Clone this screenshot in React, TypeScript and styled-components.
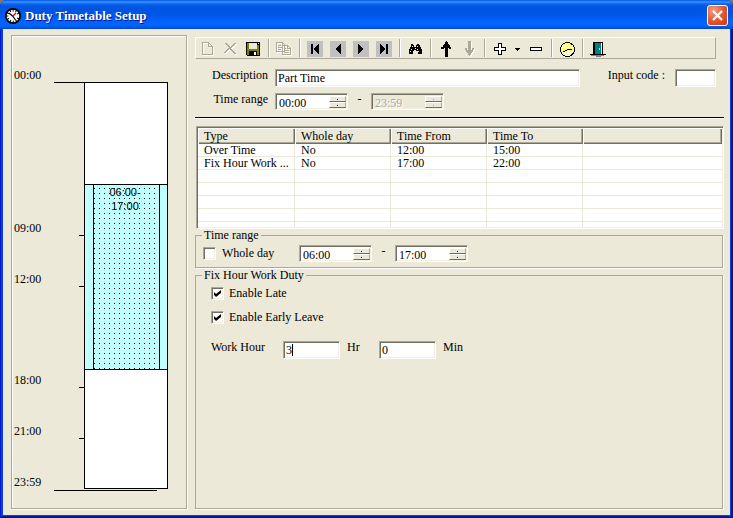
import React from 'react';
import styled, { createGlobalStyle, css } from 'styled-components';

const face = '#ece9d8';
const shade = '#aca899';
const dark = '#716f64';

const GlobalStyle = createGlobalStyle`
  * { box-sizing: border-box; }
  body {
    margin: 0;
    background: #7a7a7a;
    color: #000;
    font: 12px/14px "Liberation Serif", "Noto Sans CJK TC", serif;
  }
  button, input { font: inherit; color: inherit; border-radius: 0; margin: 0; }
`;

const Window = styled.main`
  display: flex;
  flex-direction: column;
  min-height: 100vh;
  overflow: hidden;
  border-radius: 7px 7px 0 0;
  background: #0a3fd8;
  box-shadow: inset 1px 0 #0019cf, inset -1px -1px #00138c, inset -2px -2px #001ea0;
`;

const TitleBar = styled.header`
  display: flex;
  align-items: center;
  gap: 4px;
  height: 29px;
  padding: 2px 5px 0 5px;
  background: linear-gradient(#0058e6 0, #3a93ff 2px, #0a63ee 4px, #0054e0 7px, #0055e5 14px, #0062fb 21px, #0066ff 25px, #0059ee 27px, #0046c8 29px);
`;

const Title = styled.h1`
  flex: 1;
  margin: 0;
  color: #fff;
  font-size: 13px;
  line-height: 16px;
  font-weight: bold;
  text-shadow: 1px 1px #0f1089;
`;

const CloseButton = styled.button`
  display: grid;
  place-items: center;
  width: 21px;
  height: 21px;
  padding: 0;
  border: 1px solid #fff;
  border-radius: 3px;
  background: radial-gradient(circle at 30% 25%, #f0a088, #e25a35 50%, #c8370e);
`;

const Client = styled.div`
  flex: 1;
  display: flex;
  gap: 7px;
  margin: 0 3px 3px;
  padding: 6px 6px 5px 8px;
  background: ${face};
`;

const etched = css`
  border: 1px solid ${shade};
  box-shadow: 1px 1px #fff, inset 1px 1px #fff;
`;

const sunken = css`
  border: 1px solid;
  border-color: ${shade} #fff #fff ${shade};
  box-shadow: inset 1px 1px ${dark}, inset -1px -1px #f1efe2;
`;

const DayPanel = styled.section`
  ${etched}
  display: flex;
  flex: 0 0 176px;
  margin-right: 1px;
  margin-bottom: 1px;
  padding: 46px 18px 19px 2px;
`;

const Axis = styled.ol`
  flex: 1;
  display: grid;
  grid-template-rows: 9fr 3fr 6fr 3fr 3fr 0;
  margin: 0;
  padding: 0;
  list-style: none;
`;

const AxisMark = styled.li<{ $edge?: boolean }>`
  display: flex;
  justify-content: space-between;
  align-items: flex-start;
  min-height: 0;
  &::after {
    content: '';
    width: ${p => (p.$edge ? 30 : 5)}px;
    height: 1px;
    background: #000;
  }
  &:last-child::after { width: 103px; margin: 1px -73px 0 0; }
`;

const AxisTime = styled.time`
  margin-top: -14px;
`;

const DayColumn = styled.div`
  flex: 0 0 84px;
  display: grid;
  grid-template-rows: 6fr 11fr 7fr;
  border: 1px solid #000;
  background: #fff;
`;

const DutyBlock = styled.div`
  grid-row: 2;
  display: flex;
  padding: 0 7px 0 8px;
  border: solid #000;
  border-width: 1px 0;
  background: #c0ffff;
`;

const DutyTime = styled.div`
  flex: 1;
  padding-right: 3px;
  border: solid #000;
  border-width: 0 1px;
  text-align: center;
  font-family: "Liberation Sans", sans-serif;
  font-size: 11px;
  background:
    linear-gradient(#c0ffff 4px, transparent 4px) 0 -1px / 5px 5px,
    linear-gradient(90deg, #000 1px, #c0ffff 1px) 0 -1px / 5px 5px;
`;

const Editor = styled.form`
  flex: 1;
  min-width: 0;
  display: flex;
  flex-direction: column;
`;

const Toolbar = styled.div`
  display: flex;
  height: 22px;
  margin: 2px 8px 0 0;
  border: 1px solid;
  border-color: #fff ${shade} ${shade} #fff;
`;

const ToolButton = styled.button<{ $narrow?: boolean }>`
  display: flex;
  width: ${p => (p.$narrow ? 13 : 23)}px;
  padding: 3px 0 0 3px;
  border: 0;
  background: none;
  svg { flex: none; }
`;

const Separator = styled.span`
  width: 2px;
  margin: 1px 3px;
  border-left: 1px solid ${shade};
  border-right: 1px solid #fff;
`;

const HeaderFields = styled.div`
  display: grid;
  grid-template-columns: 73px 305px 1fr 41px;
  column-gap: 7px;
  row-gap: 6px;
  margin: 10px 8px 0 0;
`;

const FieldLabel = styled.label`
  text-align: right;
  line-height: 13px;
`;

const CodeLabel = styled(FieldLabel)`
  white-space: pre;
`;

const Row = styled.div<{ $span?: boolean }>`
  display: flex;
  align-items: flex-start;
  ${p => p.$span && 'grid-column: span 3;'}
`;

const Dash = styled.span`
  width: 23px;
  line-height: 12px;
  text-align: center;
`;

const TextInput = styled.input<{ $width?: number }>`
  ${sunken}
  width: ${p => (p.$width ? `${p.$width}px` : '100%')};
  height: 18px;
  padding: 1px 3px 0 2px;
  background: #fff;
  outline: none;
`;

const SpinFrame = styled.div<{ $off?: boolean }>`
  ${sunken}
  display: flex;
  width: 73px;
  height: 17px;
  padding: 2px 1px 1px 3px;
  background: ${p => (p.$off ? face : '#fff')};
`;

const SpinText = styled.input`
  flex: 1;
  min-width: 0;
  padding: 1px 0 0;
  border: 0;
  background: none;
  outline: none;
  &:disabled { color: ${shade}; text-shadow: 1px 1px #fff; }
`;

const SpinButtons = styled.div`
  display: grid;
  grid-template-rows: 1fr 1fr;
  width: 17px;
`;

const SpinButton = styled.button`
  display: grid;
  place-items: center;
  min-height: 0;
  padding: 0;
  border: 1px solid;
  border-color: #fff ${shade} ${dark} #fff;
  background: ${face};
  &::after { content: ''; width: 1px; height: 1px; background: #000; }
  &:disabled::after { background: ${shade}; }
`;

const Rule = styled.hr`
  width: 100%;
  height: 2px;
  margin: 7px 0;
  border: 0;
  border-top: 1px solid #000;
  border-bottom: 1px solid #fff;
`;

const TableFrame = styled.div`
  ${sunken}
  height: 103px;
  margin-left: 1px;
  padding: 1px;
  overflow: hidden;
  background: #fff;
`;

const Table = styled.table`
  width: 100%;
  table-layout: fixed;
  border-collapse: separate;
  border-spacing: 0;
  line-height: 12px;
`;

const Column = styled.col<{ $width?: number }>`
  ${p => p.$width && `width: ${p.$width}px;`}
`;

const HeadCell = styled.th`
  height: 16px;
  padding: 0 6px 1px;
  background: ${face};
  box-shadow: inset 1px 1px #fff, inset -1px -1px ${dark}, inset -2px -2px ${shade};
  font-weight: normal;
  text-align: left;
`;

const Cell = styled.td`
  height: 13px;
  padding: 0 2px 0 6px;
  border: solid ${face};
  border-width: 0 1px 1px 0;
  white-space: nowrap;
  &:last-child { border-right: 0; }
`;

const Group = styled.fieldset<{ $grow?: boolean }>`
  min-width: 0;
  margin: 0 1px 1px 0;
  padding: 3px 7px 5px 7px;
  border: 1px solid ${shade};
  box-shadow: 1px 1px #fff;
  ${p => p.$grow && 'flex: 1;'}
`;

const Legend = styled.legend`
  margin-left: -1px;
  padding: 0 2px;
  line-height: 13px;
  background: ${face};
`;

const RangeRow = styled(Row)`
  height: 17px;
`;

const Options = styled.div`
  display: flex;
  flex-direction: column;
  gap: 10px;
  padding: 2px 8px 0;
`;

const CheckLabel = styled.label<{ $wide?: boolean }>`
  display: flex;
  align-items: flex-start;
  height: 14px;
  line-height: 13px;
  gap: ${p => (p.$wide ? 6 : 5)}px;
  ${p => p.$wide && 'width: 96px; height: 17px; padding-top: 2px;'}
`;

const CheckBox = styled.input`
  ${sunken}
  appearance: none;
  display: grid;
  place-items: center;
  flex: none;
  width: 13px;
  height: 13px;
  background: #fff;
  &:checked::after {
    content: '';
    width: 7px;
    height: 7px;
    background: #000;
    clip-path: polygon(0 29%, 29% 57%, 100% 0, 100% 43%, 29% 100%, 0 71%);
  }
`;

const WorkRow = styled(Row)`
  gap: 7px;
  margin-top: 6px;
`;

const WorkLabel = styled.label<{ $width: number }>`
  width: ${p => p.$width}px;
  line-height: 12px;
`;

const HourBox = styled.span`
  position: relative;
  display: flex;
`;

const TextCursor = styled.span`
  position: absolute;
  left: 9px;
  top: 3px;
  width: 1px;
  height: 12px;
  background: #000;
`;

const Icon = ({ children }: { children: React.ReactNode }) => (
  <svg width="16" height="16" viewBox="0 0 16 16" shapeRendering="crispEdges" aria-hidden="true">{children}</svg>
);

const Embossed = ({ d, fill }: { d: string; fill?: boolean }) => (
  <Icon>
    <path d={d} transform="translate(1 1)" fill={fill ? '#fff' : 'none'} stroke={fill ? 'none' : '#fff'} />
    <path d={d} fill={fill ? shade : 'none'} stroke={fill ? 'none' : shade} />
  </Icon>
);

const NavIcon = ({ d }: { d: string }) => (
  <Icon><path fill="#c0c0c0" d="M0 0h16v16H0z" /><path d={d} /></Icon>
);

const icons = {
  create: <Embossed d="M3.5 1.5h6v4h4v8h-10zM9.5 1.5l4 4" />,
  remove: <Embossed fill d="M2 2h3v1h1v1h1v1h1v1h1v-1h1v-1h1v-1h1v-1h2v1h-1v1h-1v1h-1v1h-1v1h-1v1h1v1h1v1h1v1h1v1h1v1h-2v-1h-1v-1h-1v-1h-1v-1h-1v-1h-1v1h-1v1h-1v1h-1v1h-2v-1h1v-1h1v-1h1v-1h1v-1h1v-1h-1v-1h-1v-1h-1v-1h-1v-1h-1z" />,
  save: (
    <Icon>
      <path d="M1 1h14v14H2v-1H1z" /><path fill="#808000" d="M2 2h2v6h8V4h2v10H2zM4 8h8v2H4z" />
      <path fill={face} d="M4 2h8v6H4zM13 2h1v1h-1z" /><path d="M4 10h8v4H4z" /><path fill="#fff" d="M9 11h2v3H9z" />
    </Icon>
  ),
  copy: <Embossed d="M.5 1.5h6l2 2v7h-8zM6.5 1.5v3h2M2 4.5h3M2 6.5h5M2 8.5h3M6.5 4.5h5l3 3v6h-8zM11.5 4.5v3h3M8 7.5h2M8 9.5h5M8 11.5h5" />,
  first: <NavIcon d="M4 3h2v10H4zM12 3v10h-1v-1h-1v-1H9v-1H8V9H7V7h1V6h1V5h1V4h1V3z" />,
  prev: <NavIcon d="M11 3v10h-1v-1H9v-1H8v-1H7V9H6V7h1V6h1V5h1V4h1V3z" />,
  next: <NavIcon d="M5 3v10h1v-1h1v-1h1v-1h1V9h1V7H9V6H8V5H7V4H6V3z" />,
  last: <NavIcon d="M4 3v10h1v-1h1v-1h1v-1h1V9h1V7H8V6H7V5H6V4H5V3zM10 3h2v10h-2z" />,
  find: (
    <Icon>
      <path d="M4 3h2v1h1v2h2V4h1V3h2v1h1v2h1v2h1v5h-4v-3H9V9H7v1H6v3H2V8h1V6h1z" />
      <path fill={face} d="M5 5h1v1H5zM4 8h1v1H4zM3 10h1v1H3zM8 7h1v1H8zM10 5h1v1h-1zM10 8h1v1h-1zM11 10h1v1h-1z" />
    </Icon>
  ),
  up: <Icon><path d="M8 0h1v1h1v2h1v1h1v2h1v2h-2V7h-1v9H7V7H6v1H3V6h2V4h1V3h1V1h1z" /></Icon>,
  down: <Embossed fill d="M7 0h3v9h1V7h2v2h-1v2h-1v1h-1v2H9v1H8v-1H7v-2H6v-1H5V9H4V7h2v2h1z" />,
  add: <Icon><path d="M6 2h4v4h4v4h-4v4H6v-4H2V6h4z" /><path fill="#fff" d="M7 3h2v4h4v2H9v4H7V9H3V7h4z" /></Icon>,
  more: <svg width="6" height="16" shapeRendering="crispEdges" aria-hidden="true"><path d="M0 7h5v1H4v1H3v1H2V9H1V8H0z" /></svg>,
  subtract: <Icon><path d="M2 6h12v4H2z" /><path fill="#fff" d="M3 7h10v2H3z" /></Icon>,
  clock: (
    <Icon>
      <circle cx="8.5" cy="8.5" r="7" fill="#fffcc8" stroke="#000" />
      <path stroke="#ffff50" strokeDasharray="1 1" d="M5 3.5h7M4 5.5h9M3 7.5h11M4 9.5h9M4 11.5h9M6 13.5h5" />
      <path fill="none" stroke="#000" d="M4 10.500h2M6 9.500h2M8 8.500h5" />
    </Icon>
  ),
  exit: (
    <Icon>
      <path d="M3 1h10v12h3v1H0v-1h3z" /><path fill="#fff" d="M11 2h1v11h-1z" />
      <path fill="#008080" d="M5 2h6v11H5z" /><path fill="#8ff" d="M9 7h1v2H9z" />
      <path fill="#808080" d="M1 14h13v1H1zM6 15h5v1H6z" /><path d="M4 13h2v1H4z" />
    </Icon>
  ),
};

type Tool = { label: string; icon: React.ReactNode; off?: boolean; narrow?: boolean };

const toolGroups: Tool[][] = [
  [{ label: 'New', icon: icons.create, off: true }, { label: 'Delete', icon: icons.remove, off: true }, { label: 'Save', icon: icons.save }],
  [{ label: 'Copy', icon: icons.copy, off: true }],
  [{ label: 'First', icon: icons.first }, { label: 'Previous', icon: icons.prev }, { label: 'Next', icon: icons.next }, { label: 'Last', icon: icons.last }],
  [{ label: 'Find', icon: icons.find }],
  [{ label: 'Move up', icon: icons.up }, { label: 'Move down', icon: icons.down, off: true }],
  [{ label: 'Add', icon: icons.add }, { label: 'Add options', icon: icons.more, narrow: true }, { label: 'Remove', icon: icons.subtract }],
  [{ label: 'Clock', icon: icons.clock }],
  [{ label: 'Exit', icon: icons.exit }],
];

const duties = [
  ['Over Time', 'No', '12:00', '15:00', ''],
  ['Fix Hour Work ...', 'No', '17:00', '22:00', ''],
  ...Array.from({ length: 5 }, () => ['', '', '', '', '']),
];

const TimeSpinner = ({ id, label, value, off }: { id?: string; label: string; value: string; off?: boolean }) => (
  <SpinFrame $off={off}>
    <SpinText id={id} aria-label={label} defaultValue={value} disabled={off} />
    <SpinButtons>
      <SpinButton type="button" aria-label={`${label} up`} disabled={off} />
      <SpinButton type="button" aria-label={`${label} down`} disabled={off} />
    </SpinButtons>
  </SpinFrame>
);

const AppLogo = () => (
  <svg width="16" height="16" viewBox="0 0 16 16" aria-hidden="true">
    <circle cx="8" cy="8" r="8" />
    <circle cx="8" cy="8" r="4.5" fill="#fff" />
    <circle cx="8" cy="8" r="5" fill="none" stroke="#fff" strokeWidth="2.5" strokeDasharray="1.7 .92" />
    <path d="M4 5l4 3.5L10.5 12" fill="none" stroke="#000" strokeWidth="1.2" />
    <path d="M8 8l3-3" stroke="#f00" strokeWidth="1.5" />
  </svg>
);

export default function App() {
  return (
    <Window>
      <GlobalStyle />
      <TitleBar>
        <AppLogo />
        <Title>Duty Timetable Setup</Title>
        <CloseButton type="button" aria-label="Close">
          <svg width="13" height="13" viewBox="0 0 13 13" aria-hidden="true"><path d="M2 2l9 9M11 2l-9 9" stroke="#fff" strokeWidth="2.2" /></svg>
        </CloseButton>
      </TitleBar>
      <Client>
        <DayPanel aria-label="Day timetable">
          <Axis>
            {['00:00', '09:00', '12:00', '18:00', '21:00', '23:59'].map((time, i) => (
              <AxisMark key={time} $edge={i === 0}><AxisTime>{time}</AxisTime></AxisMark>
            ))}
          </Axis>
          <DayColumn>
            <DutyBlock><DutyTime>06:00-<br />17:00</DutyTime></DutyBlock>
          </DayColumn>
        </DayPanel>
        <Editor onSubmit={e => e.preventDefault()}>
          <Toolbar role="toolbar">
            {toolGroups.map((group, i) => (
              <React.Fragment key={i}>
                {i > 0 && <Separator />}
                {group.map(tool => (
                  <ToolButton key={tool.label} type="button" aria-label={tool.label} disabled={tool.off} $narrow={tool.narrow}>{tool.icon}</ToolButton>
                ))}
              </React.Fragment>
            ))}
          </Toolbar>
          <HeaderFields>
            <FieldLabel htmlFor="description">Description</FieldLabel>
            <TextInput id="description" defaultValue="Part Time" />
            <CodeLabel htmlFor="code">Input code : </CodeLabel>
            <TextInput id="code" />
            <FieldLabel htmlFor="range-from">Time range</FieldLabel>
            <Row $span>
              <TimeSpinner id="range-from" label="Range start" value="00:00" />
              <Dash>-</Dash>
              <TimeSpinner label="Range end" value="23:59" off />
            </Row>
          </HeaderFields>
          <Rule />
          <TableFrame>
            <Table>
              <colgroup><Column $width={97} /><Column $width={96} /><Column $width={96} /><Column $width={96} /><Column /></colgroup>
              <thead>
                <tr>{['Type', 'Whole day', 'Time From', 'Time To', ''].map(name => <HeadCell key={name}>{name}</HeadCell>)}</tr>
              </thead>
              <tbody>
                {duties.map((duty, r) => <tr key={r}>{duty.map((text, c) => <Cell key={c}>{text}</Cell>)}</tr>)}
              </tbody>
            </Table>
          </TableFrame>
          <Group>
            <Legend>Time range</Legend>
            <RangeRow>
              <CheckLabel $wide><CheckBox type="checkbox" />Whole day</CheckLabel>
              <TimeSpinner label="Duty start" value="06:00" />
              <Dash>-</Dash>
              <TimeSpinner label="Duty end" value="17:00" />
            </RangeRow>
          </Group>
          <Group $grow>
            <Legend>Fix Hour Work Duty</Legend>
            <Options>
              <CheckLabel><CheckBox type="checkbox" defaultChecked />Enable Late</CheckLabel>
              <CheckLabel><CheckBox type="checkbox" defaultChecked />Enable Early Leave</CheckLabel>
              <WorkRow>
                <WorkLabel $width={65} htmlFor="hours">Work Hour</WorkLabel>
                <HourBox><TextInput id="hours" $width={57} defaultValue="3" /><TextCursor /></HourBox>
                <WorkLabel $width={25} htmlFor="minutes">Hr</WorkLabel>
                <TextInput id="minutes" $width={57} defaultValue="0" />
                <WorkLabel $width={25} htmlFor="minutes">Min</WorkLabel>
              </WorkRow>
            </Options>
          </Group>
        </Editor>
      </Client>
    </Window>
  );
}
